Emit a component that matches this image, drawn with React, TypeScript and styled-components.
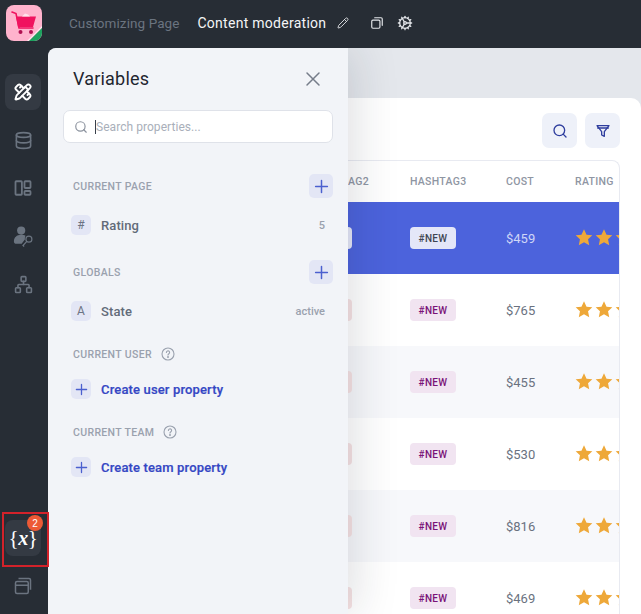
import React from "react";
import styled, { createGlobalStyle } from "styled-components";
import { PencilRuler, Database, Network, Cog, Pencil } from "lucide-react";

const Global = createGlobalStyle`
  html, body { margin: 0; padding: 0; width: 641px; height: 614px; overflow: hidden; background: #272d35; }
  * { box-sizing: border-box; }
  body { font-family: Roboto, "Noto Sans", sans-serif; }
`;

const Shell = styled.div`
  width: 641px; height: 614px; display: grid;
  grid-template-columns: 48px 1fr; grid-template-rows: 48px 1fr;
  background: #272d35; overflow: hidden;
`;
const TopBar = styled.header`
  grid-column: 1 / 3; display: flex; align-items: center; padding: 0 0 2px 6px;
`;
const Logo = styled.div`
  width: 36px; height: 36px; border-radius: 8px; background: #ffb3cd; overflow: hidden;
  display: flex; margin-right: 27px;
`;
const Crumb = styled.span`
  font-size: 13.5px; letter-spacing: .08px; color: #6b7480; margin-right: 18px; white-space: nowrap;
`;
const Title = styled.span`
  font-size: 14px; letter-spacing: .27px; color: #f4f5f7; margin-right: 11px; white-space: nowrap;
`;
const TopIcon = styled.span<{ $gap: number }>`
  display: inline-flex; margin-right: ${(p) => p.$gap}px; color: #e4e6ea;
`;
const Rail = styled.nav`
  display: flex; flex-direction: column; align-items: center; padding: 26px 2px 0 0; position: relative; z-index: 3;
`;
const RailBtn = styled.button<{ $active?: boolean }>`
  width: 36px; height: 36px; border: 0; padding: 0; border-radius: 8px; cursor: pointer;
  background: ${(p) => (p.$active ? "#343a43" : "transparent")};
  color: ${(p) => (p.$active ? "#ffffff" : "#6b7480")};
  display: flex; align-items: center; justify-content: center; position: relative;
`;
const RailGroup = styled.div`
  display: flex; flex-direction: column; gap: 12px;
`;
const RailBottom = styled.div`
  margin-top: auto; display: flex; flex-direction: column; gap: 12px; padding-bottom: 10px; position: relative;
`;
const VarMark = styled.span`
  font-family: "Liberation Serif", serif; font-size: 21px; color: #fff; white-space: nowrap; letter-spacing: -.4px;
  i { font-size: 20px; font-weight: 700; }
`;
const Badge = styled.span`
  position: absolute; top: -5px; right: -2px; width: 16px; height: 16px; border-radius: 50%;
  background: #ed5a36; color: #fff; font-size: 10px; font-weight: 500;
  display: flex; align-items: center; justify-content: center;
`;
const Highlight = styled.div`
  position: absolute; left: -3px; top: -8px; width: 47px; height: 55px; border: 2px solid #d3222a; pointer-events: none;
`;
const Main = styled.main`
  position: relative; background: #e4e7ec; border-top-left-radius: 8px; overflow: hidden;
  display: flex;
`;
const Panel = styled.aside`
  width: 300px; flex: none; background: #f2f4f8; padding: 0 15px; position: relative; z-index: 2;
  box-shadow: 6px 0 46px rgba(30, 35, 45, .15); border-top-left-radius: 8px;
`;
const PanelHead = styled.div`
  height: 62px; display: flex; align-items: center; justify-content: space-between; padding: 0 0 0 10px;
`;
const PanelTitle = styled.h2`
  margin: -2px 0 0; font-size: 18px; font-weight: 400; color: #1f2630; letter-spacing: .2px;
`;
const Close = styled.button`
  border: 0; background: none; padding: 0; color: #767d8a; display: flex; margin-right: 11px;
`;
const Search = styled.div`
  height: 33px; background: #fff; border: 1px solid #dfe2e9; border-radius: 7px;
  display: flex; align-items: center; padding-left: 10px; gap: 9px; color: #8b929e;
`;
const Caret = styled.span`
  width: 1px; height: 14px; background: #39404b; margin: 0 -9px 0 -2px;
`;
const SearchInput = styled.span`
  font-size: 12px; color: #a9afba; letter-spacing: .05px;
`;
const Section = styled.div<{ $top: number }>`
  margin-top: ${(p) => p.$top}px;
`;
const SectionHead = styled.div`
  height: 24px; display: flex; align-items: center; padding-left: 10px; justify-content: space-between;
`;
const SectionLabel = styled.span`
  font-size: 10.5px; font-weight: 500; color: #9aa1ae; letter-spacing: .35px; display: inline-flex; align-items: center; gap: 9px;
`;
const AddBtn = styled.button`
  width: 24px; height: 24px; border-radius: 5px; border: 0; background: #e3e6f5; color: #4b60cf;
  display: flex; align-items: center; justify-content: center; padding: 0;
`;
const Row = styled.div<{ $top?: number }>`
  height: 20px; margin-top: ${(p) => p.$top ?? 0}px; display: flex; align-items: center; padding-left: 8px; gap: 10px;
`;
const Chip = styled.span`
  width: 20px; height: 20px; border-radius: 5px; background: #e3e6f5; color: #6c7483; font-size: 12px;
  display: flex; align-items: center; justify-content: center; flex: none;
`;
const PlusChip = styled(Chip)`
  color: #4b60cf;
`;
const RowName = styled.span`
  font-size: 13px; font-weight: 500; color: #626b79; flex: 1; letter-spacing: .1px;
`;
const RowValue = styled.span`
  font-size: 11px; font-weight: 500; color: #9aa1ae; padding-right: 8px;
`;
const CreateLink = styled.span`
  font-size: 13px; font-weight: 500; color: #3547c4; letter-spacing: .15px;
  -webkit-text-stroke: .2px #3547c4;
`;
const Content = styled.section`
  flex: 1; background: #fff; margin-top: 50px; border-radius: 0 10px 0 0; padding: 15px 21px 0 0; min-width: 0;
`;
const Tools = styled.div`
  display: flex; justify-content: flex-end; gap: 8px; height: 35px;
`;
const Tool = styled.button`
  width: 35px; height: 35px; border: 0; padding: 0; border-radius: 7px; background: #eef1f9; color: #2f3e9e;
  display: flex; align-items: center; justify-content: center;
`;
const Table = styled.div`
  margin-top: 12px; border: 1px solid #e8eaf1; border-left: 0; border-bottom: 0;
  border-radius: 0 8px 0 0; overflow: hidden;
`;
const Grid = styled.div`
  display: grid; grid-template-columns: 62px 96px 69px 1fr; align-items: center;
`;
const HeadRow = styled(Grid)`
  height: 41px;
  span { font-size: 10.5px; font-weight: 500; letter-spacing: .3px; color: #8f96a3; }
`;
const BodyRow = styled(Grid)<{ $kind: "sel" | "odd" | "even" }>`
  height: 72px;
  background: ${(p) => (p.$kind === "sel" ? "#4c63dc" : p.$kind === "odd" ? "#ffffff" : "#f7f8fb")};
  color: ${(p) => (p.$kind === "sel" ? "#cfd6f7" : "#6a7280")};
`;
const Tag = styled.span<{ $tone: "pink" | "rose" | "sel" }>`
  display: inline-flex; width: 46px; height: 22px; align-items: center; justify-content: center; border-radius: 4px;
  font-size: 10px; font-weight: 500; letter-spacing: .3px;
  background: ${(p) => (p.$tone === "sel" ? "#e4e7f8" : p.$tone === "pink" ? "#f1e4f1" : "#f6e2e3")};
  color: ${(p) => (p.$tone === "sel" ? "#3f4652" : p.$tone === "pink" ? "#7a1378" : "#a3303f")};
`;
const ClippedTag = styled(Tag)`
  width: 4px; border-radius: 0 4px 4px 0;
`;
const TagCell = styled.div`display: flex;`;
const Cost = styled.span`
  font-size: 13px;
`;
const Stars = styled.div`
  display: flex; margin: -2px 0 0 -1px;
`;

const Star = () => (
  <svg width="20" height="19" viewBox="0 0 24 24" fill="#eea839"><path d="M12 1.500l3.200 7 7.300.8-5.400 5 1.500 7.400L12 18l-6.600 3.700 1.500-7.400-5.400-5 7.300-.8z" /></svg>
);

const S = (p: { children: React.ReactNode; size?: number }) => (
  <svg width={p.size ?? 20} height={p.size ?? 20} viewBox="0 0 24 24" fill="none" stroke="currentColor" strokeWidth="2" strokeLinecap="round" strokeLinejoin="round">{p.children}</svg>
);

const Plus = ({ size = 15 }: { size?: number }) => (
  <svg width={size} height={size} viewBox="0 0 14 14" stroke="currentColor" strokeWidth="1.400" strokeLinecap="round"><path d="M7 1.500v11M1.500 7h11" /></svg>
);
const Help = () => (
  <svg width="14" height="14" viewBox="0 0 14 14" fill="none" stroke="#9aa1ae" strokeWidth="1.100"><circle cx="7" cy="7" r="6" /><path d="M5.400 5.500a1.600 1.600 0 1 1 2.500 1.300c-.6.400-.9.700-.9 1.300" strokeLinecap="round" /><circle cx="7" cy="10" r=".4" fill="#9aa1ae" /></svg>
);

const rows = [
  { cost: "$459", kind: "sel" as const },
  { cost: "$765", kind: "odd" as const },
  { cost: "$455", kind: "even" as const },
  { cost: "$530", kind: "odd" as const },
  { cost: "$816", kind: "even" as const },
  { cost: "$469", kind: "odd" as const },
];

export default function App() {
  return (
    <Shell>
      <Global />
      <TopBar>
        <Logo>
          <svg width="36" height="36" viewBox="0 0 36 36">
            <path d="M6 7l4 1.500 3 14.500h14" fill="none" stroke="#f0125f" strokeWidth="1.600" strokeLinecap="round" />
            <path d="M10 11.500h20l-3 10.500H12z" fill="#f0125f" />
            <path d="M16 11.500l3-3 3 1 2 2z" fill="#ffe3ec" />
            <circle cx="14.500" cy="27" r="2" fill="#b01050" /><circle cx="25" cy="27" r="2" fill="#b01050" />
            <path d="M36 22.500L22.500 36H21l15-15z" fill="#fff" opacity=".75" />
            <path d="M36 23v13H23z" fill="#1ca35f" />
          </svg>
        </Logo>
        <Crumb>Customizing Page</Crumb>
        <Title>Content moderation</Title>
        <TopIcon $gap={21}><Pencil size={12} strokeWidth={1.800} /></TopIcon>
        <TopIcon $gap={13}><S size={14}><rect x="3" y="7" width="14" height="14" rx="2" /><path d="M8 3h11a2 2 0 0 1 2 2v11" /></S></TopIcon>
        <TopIcon $gap={0}><Cog size={16} strokeWidth={1.900} /></TopIcon>
      </TopBar>
      <Rail>
        <RailGroup>
          <RailBtn $active aria-label="Design"><PencilRuler size={18} strokeWidth={2.500} /></RailBtn>
          <RailBtn aria-label="Data"><Database size={19} strokeWidth={2} /></RailBtn>
          <RailBtn aria-label="Layouts">
            <svg width="18" height="18" viewBox="0 0 24 24" fill="none" stroke="currentColor" strokeWidth="2.400"><rect x="2" y="3" width="8.500" height="18" rx="1" /><rect x="14" y="3" width="8" height="9" rx="1" /><rect x="14" y="16" width="8" height="5" rx="1" /></svg>
          </RailBtn>
          <RailBtn aria-label="Users">
            <svg width="20" height="22" viewBox="0 0 22 24" fill="currentColor"><circle cx="9" cy="6" r="4.500" /><path d="M1 18c0-4.500 3-7.500 8-7.500 2 0 3.500.4 4.800 1.200-.8 1.400-.9 2.600-.6 3.800L9.500 20.500H4c-2 0-3-.8-3-2.500z" /><g fill="none" stroke="currentColor" strokeWidth="1.300"><circle cx="17.500" cy="15.500" r="3.300" /><path d="M15.200 18L11 22.500l1.300 1" /></g></svg>
          </RailBtn>
          <RailBtn aria-label="Hierarchy"><Network size={19} strokeWidth={2} /></RailBtn>
        </RailGroup>
        <RailBottom>
          <Highlight />
          <RailBtn $active aria-label="Variables">
            <VarMark>{"{"}<i>x</i>{"}"}</VarMark>
            <Badge>2</Badge>
          </RailBtn>
          <RailBtn aria-label="Windows">
            <svg width="18" height="18" viewBox="0 0 24 24" fill="none" stroke="currentColor" strokeWidth="2"><rect x="2" y="6" width="17" height="16" rx="2" /><path d="M2 11h17M6 2h14a2 2 0 0 1 2 2v13" /></svg>
          </RailBtn>
        </RailBottom>
      </Rail>
      <Main>
        <Panel>
          <PanelHead>
            <PanelTitle>Variables</PanelTitle>
            <Close aria-label="Close"><svg width="18" height="18" viewBox="0 0 18 18" stroke="currentColor" strokeWidth="1.500" strokeLinecap="round"><path d="M3 3l12 12M15 3L3 15" /></svg></Close>
          </PanelHead>
          <Search>
            <S size={14}><circle cx="11" cy="11" r="8" /><path d="M21 21l-4.300-4.300" /></S>
            <Caret />
            <SearchInput>Search properties...</SearchInput>
          </Search>
          <Section $top={31}>
            <SectionHead><SectionLabel>CURRENT PAGE</SectionLabel><AddBtn aria-label="Add"><Plus /></AddBtn></SectionHead>
            <Row $top={17}><Chip>#</Chip><RowName>Rating</RowName><RowValue>5</RowValue></Row>
          </Section>
          <Section $top={25}>
            <SectionHead><SectionLabel>GLOBALS</SectionLabel><AddBtn aria-label="Add"><Plus /></AddBtn></SectionHead>
            <Row $top={17}><Chip>A</Chip><RowName>State</RowName><RowValue>active</RowValue></Row>
          </Section>
          <Section $top={21}>
            <SectionHead><SectionLabel>CURRENT USER <Help /></SectionLabel></SectionHead>
            <Row $top={13}><PlusChip><Plus size={13} /></PlusChip><CreateLink>Create user property</CreateLink></Row>
          </Section>
          <Section $top={21}>
            <SectionHead><SectionLabel>CURRENT TEAM <Help /></SectionLabel></SectionHead>
            <Row $top={13}><PlusChip><Plus size={13} /></PlusChip><CreateLink>Create team property</CreateLink></Row>
          </Section>
        </Panel>
        <Content>
          <Tools>
            <Tool aria-label="Search"><S size={16}><circle cx="11" cy="11" r="8" /><path d="M21 21l-4.300-4.300" /></S></Tool>
            <Tool aria-label="Filter"><S size={16}><path d="M3 4h18l-7 9v7l-4-2v-5z" /><path d="M4 7.500h16" /></S></Tool>
          </Tools>
          <Table>
            <HeadRow><span>AG2</span><span>HASHTAG3</span><span>COST</span><span>RATING</span></HeadRow>
            {rows.map((r) => (
              <BodyRow key={r.cost} $kind={r.kind}>
                <TagCell><ClippedTag $tone={r.kind === "sel" ? "sel" : "rose"} /></TagCell>
                <TagCell><Tag $tone={r.kind === "sel" ? "sel" : "pink"}>#NEW</Tag></TagCell>
                <Cost>{r.cost}</Cost>
                <Stars><Star /><Star /><Star /></Stars>
              </BodyRow>
            ))}
          </Table>
        </Content>
      </Main>
    </Shell>
  );
}
